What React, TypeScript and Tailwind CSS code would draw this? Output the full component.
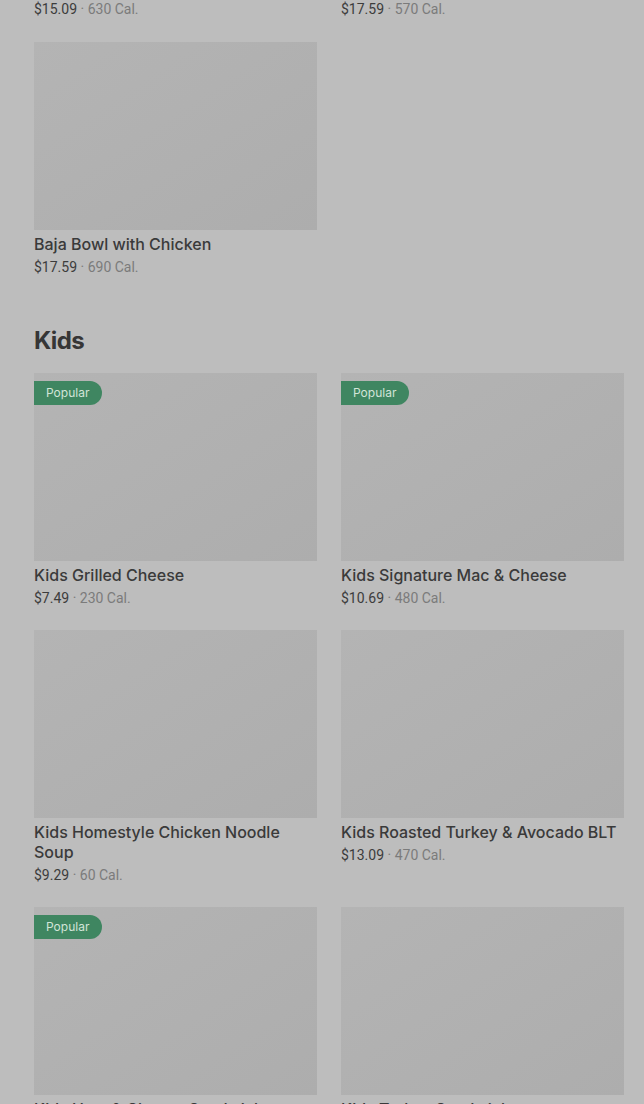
import React from 'react';

type Item = {
  name: string;
  price: string;
  cal: string;
  popular?: boolean;
};

const topRow: Item[] = [
  { name: 'Chipotle Chicken Avo Melt', price: '$15.09', cal: '630 Cal.' },
  { name: 'Mediterranean Chicken Bowl', price: '$17.59', cal: '570 Cal.' },
  { name: 'Baja Bowl with Chicken', price: '$17.59', cal: '690 Cal.' },
];

const kids: Item[] = [
  { name: 'Kids Grilled Cheese', price: '$7.49', cal: '230 Cal.', popular: true },
  { name: 'Kids Signature Mac & Cheese', price: '$10.69', cal: '480 Cal.', popular: true },
  { name: 'Kids Homestyle Chicken Noodle Soup', price: '$9.29', cal: '60 Cal.' },
  { name: 'Kids Roasted Turkey & Avocado BLT', price: '$13.09', cal: '470 Cal.' },
  { name: 'Kids Ham & Cheese Sandwich', price: '$8.49', cal: '360 Cal.', popular: true },
  { name: 'Kids Turkey Sandwich', price: '$8.49', cal: '320 Cal.' },
];

function MenuCard({ item }: { item: Item }) {
  return (
    <div className="flex flex-col">
      <div className="relative h-[188px] bg-gradient-to-br from-[#b4b4b4] to-[#adadad]">
        {item.popular && (
          <span className="absolute left-0 top-[8px] h-[24px] pl-[12px] pr-[13px] rounded-r-full bg-[#3f8661] text-[12px] leading-[24px] text-[#d2e4d8]">
            Popular
          </span>
        )}
      </div>
      <div className="mt-[4px] text-[16px] leading-[20px] font-medium text-[#3a3a3a]">{item.name}</div>
      <div
        className="mt-[3px] text-[14px] leading-[20px] text-[#3c3c3c]"
        style={{ fontFamily: 'Roboto, "Liberation Sans", sans-serif' }}
      >
        {item.price}
        <span className="text-[#7b7b7b]"> · {item.cal}</span>
      </div>
    </div>
  );
}

export default function App() {
  return (
    <div className="min-h-screen bg-[#bdbdbd] overflow-hidden" style={{ fontFamily: 'Inter, "Noto Sans", sans-serif' }}>
      <div className="-mt-[216px] pl-[34px] pr-[20px] pb-10">
        {/* previous section, scrolled past */}
        <div className="grid grid-cols-2 gap-x-6 gap-y-[23px]">
          {topRow.map(item => (
            <MenuCard key={item.name} item={item} />
          ))}
        </div>

        <h2 className="mt-[48px] mb-[16px] text-[24px] leading-[32px] font-bold tracking-tight text-[#363636]">Kids</h2>

        <div className="grid grid-cols-2 gap-x-6 gap-y-[22px]">
          {kids.map(item => (
            <MenuCard key={item.name} item={item} />
          ))}
        </div>
      </div>
    </div>
  );
}
